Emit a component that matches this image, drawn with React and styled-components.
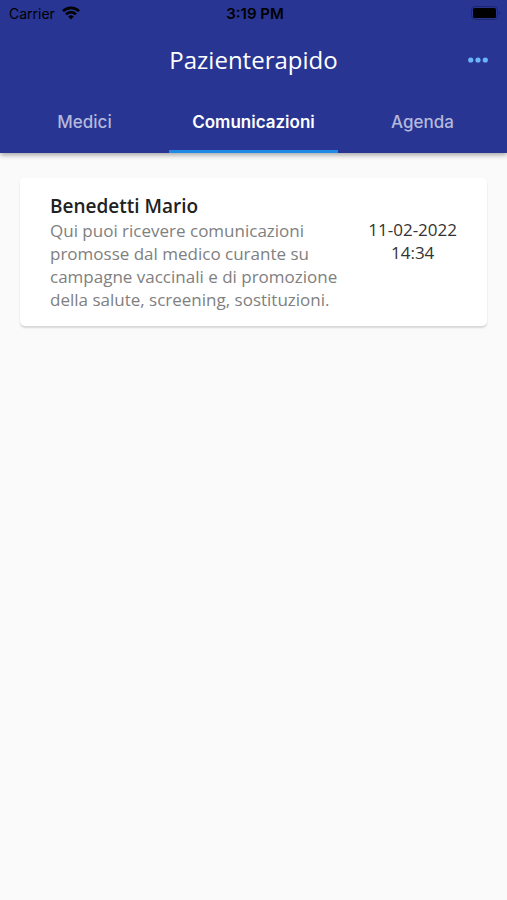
import React, { useState } from "react";
import styled, { createGlobalStyle } from "styled-components";

const TABS = ["Medici", "Comunicazioni", "Agenda"];

const MESSAGES = [
  {
    id: 1,
    sender: "Benedetti Mario",
    text: "Qui puoi ricevere comunicazioni promosse dal medico curante su campagne vaccinali e di promozione della salute, screening, sostituzioni.",
    date: "11-02-2022",
    time: "14:34",
  },
];

const WifiIcon = () => (
  <svg width="18" height="14" viewBox="0 0 18 14" aria-hidden="true">
    <g fill="none" stroke="#000" strokeWidth="2.6">
      <path d="M1 5.2a11.3 11.3 0 0 1 16 0" />
      <path d="M4 8.4a7 7 0 0 1 10 0" />
    </g>
    <path d="M9 13.4 6.2 10.6a4 4 0 0 1 5.6 0z" />
  </svg>
);

const BatteryIcon = () => (
  <svg width="30" height="14" viewBox="0 0 30 14" aria-hidden="true">
    <rect x="0.5" y="0.5" width="26" height="13" rx="3.5" fill="none" stroke="#000" strokeOpacity="0.25" />
    <rect x="2" y="2" width="23" height="10" rx="1.5" />
    <path d="M28 5v4a2.2 2.2 0 0 0 0-4z" fillOpacity="0.25" />
  </svg>
);

const DotsIcon = () => (
  <svg width="20" height="6" viewBox="0 0 20 6" fill="#6db5fb" aria-hidden="true">
    <circle cx="2.7" cy="3" r="2.6" />
    <circle cx="10" cy="3" r="2.6" />
    <circle cx="17.3" cy="3" r="2.6" />
  </svg>
);

const App = () => {
  const [active, setActive] = useState("Comunicazioni");

  return (
    <>
      <GlobalStyle />
      <Header>
        <StatusBar>
          <Carrier>
            Carrier
            <WifiIcon />
          </Carrier>
          <Clock>3:19 PM</Clock>
          <Battery>
            <BatteryIcon />
          </Battery>
        </StatusBar>
        <TitleBar>
          <Title>Pazienterapido</Title>
          <MenuButton type="button" aria-label="Menu">
            <DotsIcon />
          </MenuButton>
        </TitleBar>
        <Tabs>
          {TABS.map((tab) => (
            <Tab
              key={tab}
              type="button"
              $active={tab === active}
              onClick={() => setActive(tab)}
            >
              {tab}
            </Tab>
          ))}
        </Tabs>
      </Header>
      <List>
        {MESSAGES.map((message) => (
          <Card key={message.id}>
            <Body>
              <Sender>{message.sender}</Sender>
              <Text>{message.text}</Text>
            </Body>
            <Received>
              <span>{message.date}</span>
              <span>{message.time}</span>
            </Received>
          </Card>
        ))}
      </List>
    </>
  );
};

export default App;

const GlobalStyle = createGlobalStyle`
  body {
    margin: 0;
    background: #fafafa;
    font-family: "Open Sans", sans-serif;
  }
`;

const Header = styled.header`
  background: #283593;
  box-shadow: 0 2px 5px rgba(0, 0, 0, 0.35);
`;

const StatusBar = styled.div`
  display: grid;
  grid-template-columns: 1fr auto 1fr;
  align-items: center;
  height: 26px;
  padding: 0 6px 0 9px;
  font-family: Inter, sans-serif;
  font-size: 14px;
  color: #000;
`;

const Carrier = styled.div`
  display: flex;
  align-items: center;
  gap: 7px;
`;

const Clock = styled.time`
  font-size: 15px;
  font-weight: 600;
`;

const Battery = styled.div`
  display: flex;
  justify-content: flex-end;
`;

const TitleBar = styled.div`
  display: grid;
  grid-template-columns: 1fr auto 1fr;
  align-items: center;
  height: 67px;
  padding: 0 19px;
`;

const Title = styled.h1`
  grid-column: 2;
  margin: 0;
  font-size: 24px;
  font-weight: 400;
  color: #fff;
`;

const MenuButton = styled.button`
  justify-self: end;
  display: flex;
  padding: 8px 0;
  border: none;
  background: none;
  cursor: pointer;
`;

const Tabs = styled.nav`
  display: grid;
  grid-template-columns: repeat(3, 1fr);
`;

const Tab = styled.button`
  height: 60px;
  padding: 0;
  border: none;
  border-bottom: 3px solid ${({ $active }) => ($active ? "#2189e6" : "transparent")};
  background: none;
  font-family: Inter, sans-serif;
  font-size: 17px;
  font-weight: ${({ $active }) => ($active ? 600 : 500)};
  color: ${({ $active }) => ($active ? "#fff" : "#b4b9dc")};
  cursor: pointer;
`;

const List = styled.main`
  padding: 25px 20px;
`;

const Card = styled.article`
  display: flex;
  padding: 15px 30px;
  border-radius: 5px;
  background: #fff;
  box-shadow: 0 2px 2px rgba(0, 0, 0, 0.14);
`;

const Body = styled.div`
  flex: 1;
`;

const Sender = styled.h2`
  margin: 0;
  font-size: 19px;
  font-weight: 600;
  line-height: 26px;
  color: #212121;
`;

const Text = styled.p`
  margin: 0;
  font-size: 17px;
  line-height: 23px;
  color: #808080;
`;

const Received = styled.time`
  display: flex;
  flex-direction: column;
  align-items: center;
  padding-top: 25px;
  font-size: 17px;
  line-height: 23px;
  color: #333;
`;
